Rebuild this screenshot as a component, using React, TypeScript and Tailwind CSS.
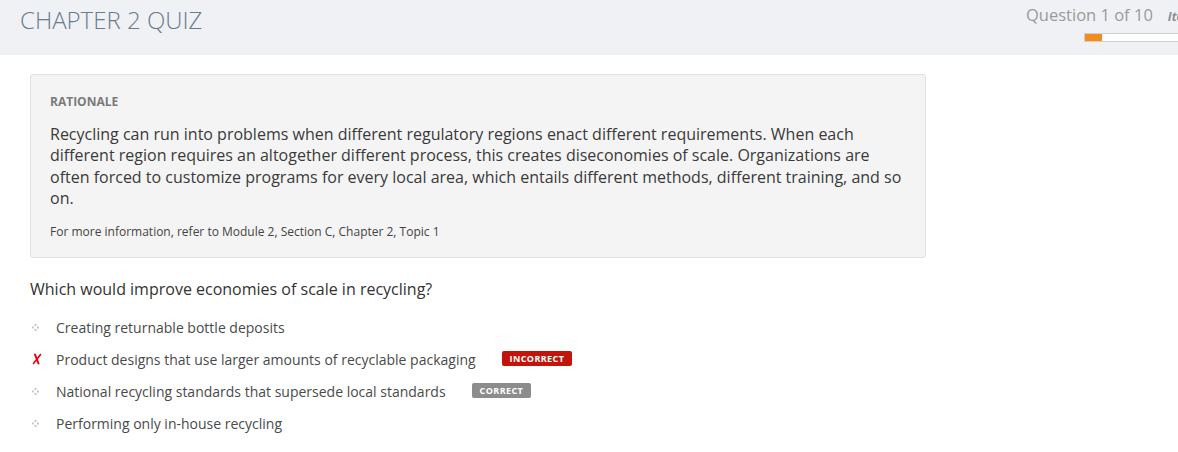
const font = { fontFamily: '"Open Sans", "Liberation Sans", sans-serif' };

function Dot() {
  return (
    <svg width="7" height="7" viewBox="0 0 7 7" className="shrink-0">
      <rect x="2.5" y="0" width="2" height="2" fill="#c8c8c8" />
      <rect x="0" y="2.5" width="2" height="2" fill="#c8c8c8" />
      <rect x="5" y="2.5" width="2" height="2" fill="#c8c8c8" />
      <rect x="2.5" y="5" width="2" height="2" fill="#c8c8c8" />
    </svg>
  );
}

function Cross() {
  return (
    <svg width="10" height="12" viewBox="0 0 10 12" className="shrink-0">
      <path d="M3 1.5 L6.5 10.5" stroke="#e8000b" strokeWidth="2" fill="none" strokeLinecap="round" />
      <path d="M8.5 1.5 L1.5 10.5" stroke="#e8000b" strokeWidth="1.6" fill="none" strokeLinecap="round" />
    </svg>
  );
}

const options = [
  { text: 'Creating returnable bottle deposits' },
  { text: 'Product designs that use larger amounts of recyclable packaging', wrong: true },
  { text: 'National recycling standards that supersede local standards', right: true },
  { text: 'Performing only in-house recycling' },
];

export default function App() {
  return (
    <div className="min-h-[452px] w-[1178px] overflow-hidden bg-white" style={font}>
      <header className="flex h-[55px] items-start justify-between overflow-hidden bg-[#eff1f5] pl-5">
        <h1 className="pt-[4px] text-[24px] font-light leading-[32px] text-[#6c7a8d]">CHAPTER 2 QUIZ</h1>
        <div className="w-[152px] shrink-0 pt-[3px]">
          <div className="flex items-baseline whitespace-nowrap">
            <span className="text-[16.5px] leading-[24px] text-[#9a9a9a]">Question 1 of 10</span>
            <span className="ml-[15px] text-[12px] font-bold italic text-[#8a8f96]">Items</span>
          </div>
          <div className="ml-[58px] mt-[6px] h-[9px] w-[140px] border border-[#cfcfcf] bg-white">
            <div className="h-full w-[17px] bg-[#f28c1c]" />
          </div>
        </div>
      </header>

      <main className="px-[30px] pt-[19px]">
        <section className="w-[896px] rounded-[3px] border border-[#e2e2e2] bg-[#f4f4f4] px-[19px] pt-[18px] pb-[17px]">
          <div className="text-[12px] font-bold leading-[17px] text-[#7a7a7a]">RATIONALE</div>
          <p className="mt-[14px] text-[16px] leading-[21.3px] text-[#3a3a3a]">
            Recycling can run into problems when different regulatory regions enact different requirements. When each
            different region requires an altogether different process, this creates diseconomies of scale. Organizations are
            often forced to customize programs for every local area, which entails different methods, different training, and so
            on.
          </p>
          <p className="mt-[14px] text-[12px] leading-[17px] text-[#444]">
            For more information, refer to Module 2, Section C, Chapter 2, Topic 1
          </p>
        </section>

        <h2 className="mt-[19px] text-[16px] leading-[24px] text-[#333]">Which would improve economies of scale in recycling?</h2>

        <ul className="mt-[10px] flex flex-col">
          {options.map((o) => (
            <li key={o.text} className="flex h-[32px] items-center text-[14px] text-[#4a4a4a]">
              <span className="flex w-[26px] items-center justify-start pl-[2px]">
                {o.wrong ? <Cross /> : <Dot />}
              </span>
              <span>{o.text}</span>
              {o.wrong && (
                <span className="ml-[26px] mb-[2px] rounded-[2px] bg-[#c3140b] px-[8px] py-[2px] text-[9px] font-bold leading-[11px] tracking-[0.4px] text-white">
                  INCORRECT
                </span>
              )}
              {o.right && (
                <span className="ml-[26px] mb-[2px] rounded-[2px] bg-[#8c8c8c] px-[8px] py-[2px] text-[9px] font-bold leading-[11px] tracking-[0.4px] text-white">
                  CORRECT
                </span>
              )}
            </li>
          ))}
        </ul>
      </main>
    </div>
  );
}
